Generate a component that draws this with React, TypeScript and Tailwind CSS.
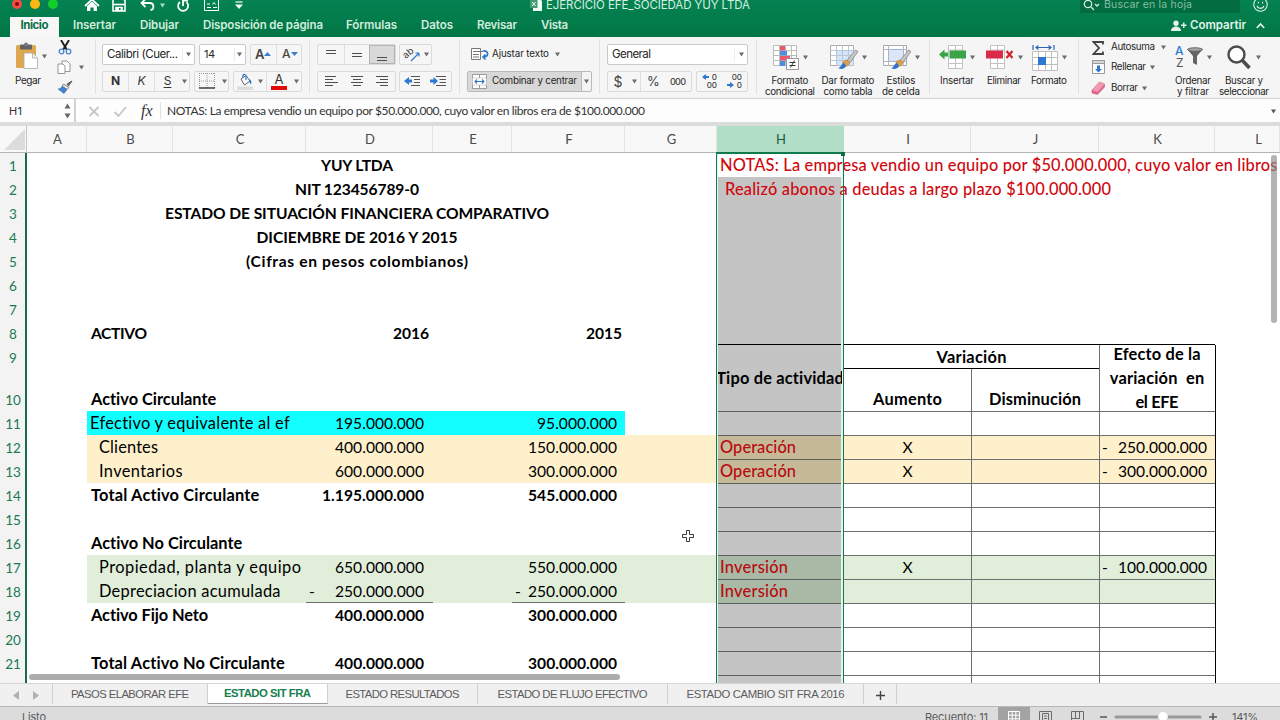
import { useLayoutEffect, useRef, useState, type ReactNode } from 'react';
import clsx from 'clsx';

interface FitProps {
  w: number;
  className?: string;
  children: string;
}

// Spreads the letters of a label so that it takes exactly `w` pixels
function Fit({ w, className, children }: FitProps) {
  const ref = useRef<HTMLSpanElement>(null);
  const [spacing, setSpacing] = useState(0);

  useLayoutEffect(() => {
    if (!ref.current || children.length < 2) return;
    const natural = ref.current.getBoundingClientRect().width;
    setSpacing((w - natural) / (children.length - 1));
  }, []);

  return (
    <span
      ref={ref}
      className={clsx('inline-block whitespace-pre shrink-0', className)}
      style={{ letterSpacing: spacing, marginRight: -spacing }}
    >
      {children}
    </span>
  );
}

function Arrow({ className = 'text-[#6b6b6b]' }: { className?: string }) {
  return (
    <svg viewBox="0 0 6 5" className={clsx('w-[5px] h-[5px] shrink-0', className)}>
      <path d="M0 0h6L3 5z" fill="currentColor" />
    </svg>
  );
}

/* ---------- Title bar ---------- */

const menuTabs = [
  { label: 'Insertar', w: 43, box: 'w-[67px]' },
  { label: 'Dibujar', w: 39, box: 'w-[63px]' },
  { label: 'Disposición de página', w: 120, box: 'w-[143px]' },
  { label: 'Fórmulas', w: 51, box: 'w-[75px]' },
  { label: 'Datos', w: 32, box: 'w-[56px]' },
  { label: 'Revisar', w: 40, box: 'w-[64px]' },
  { label: 'Vista', w: 27, box: 'w-[40px]' }
];

function TitleBar() {
  return (
    <header className="h-[37px] bg-gradient-to-b from-[#058251] to-[#027645] text-white overflow-hidden font-['Inter',sans-serif]">
      <div className="h-[17px] flex">
        <div className="w-[530px] h-[9px] flex items-center">
          <span className="ml-3 -mt-[2px] size-[10px] rounded-full bg-[#fb4946] flex items-center justify-center">
            <span className="size-[4px] rounded-full bg-[#7c0a08]" />
          </span>
          <span className="ml-[8px] -mt-[2px] size-[10px] rounded-full bg-[#fdb912]" />
          <span className="ml-[8px] -mt-[2px] size-[10px] rounded-full bg-[#12cf2c]" />
          <svg viewBox="0 0 16 14" className="ml-[26px] mt-[1px] w-[16px] h-[14px] shrink-0">
            <path d="M1 8 8 1.500 15 8" fill="none" stroke="#fff" strokeWidth="1.800" />
            <path d="M3 8.200 8 3.600l5 4.600V13H9.600V9.400H6.400V13H3z" fill="#fff" />
          </svg>
          <svg viewBox="0 0 14 14" className="ml-[12px] mt-[1px] w-[14px] h-[14px] shrink-0" fill="none" stroke="#fff" strokeWidth="1.600">
            <path d="M1 1h10.500L13 2.500V13H1z" />
            <path d="M1.500 6.500h11" />
            <path d="M4 13V9.500h6V13" fill="#fff" />
            <path d="M7.800 10v2" stroke="#047d4c" />
          </svg>
          <svg viewBox="0 0 15 14" className="ml-[14px] mt-[1px] w-[15px] h-[14px] shrink-0" fill="none" stroke="#fff" strokeWidth="1.800">
            <path d="M5.500 1 1.500 5l4 4" />
            <path d="M1.500 5h8c5 0 5 6.500 1 7" />
          </svg>
          <Arrow className="text-white/70 ml-[5px] mt-[1px]" />
          <svg viewBox="0 0 14 14" className="ml-[11px] mt-[2px] w-[14px] h-[14px] shrink-0" fill="none" stroke="#fff" strokeWidth="1.800">
            <path d="M10.500 3.200A5 5 0 1 1 4 3" />
            <path d="M7 7V1.500h5" />
          </svg>
          <svg viewBox="0 0 15 12" className="ml-[14px] w-[15px] h-[12px] shrink-0" fill="none" stroke="#fff">
            <path d="M.5.500h14v11H.500z" />
            <path d="M3 5h3M3 8.500h4M9 8.500h4M8.500 5.500l1.500-2 1.500 2" />
          </svg>
          <svg viewBox="0 0 8 8" className="ml-[16px] mt-[1px] w-[8px] h-[8px] shrink-0">
            <path d="M.5 1h7" stroke="#fff" strokeWidth="1.200" />
            <path d="M0 3.500h8L4 8z" fill="#fff" />
          </svg>
        </div>
        <div className="w-[550px] h-[10px] flex items-center">
          <svg viewBox="0 0 12 14" className="w-[12px] h-[14px]">
            <path d="M3 0h6l3 3v10H3z" fill="#f2fbf6" />
            <path d="M0 2h7.500v8H0z" fill="#3f9c70" />
            <path d="m2 4 3.500 4M5.500 4 2 8" stroke="#fff" />
          </svg>
          <Fit w={204} className="ml-1 text-[11.5px] leading-[12px] text-[#d5efe2]">EJERCICIO EFE_SOCIEDAD YUY LTDA</Fit>
        </div>
        <div className="w-[160px] h-[13px] bg-[#026b40] flex items-center pb-[3px]">
          <svg viewBox="0 0 17 12" className="ml-[3px] w-[17px] h-[12px]" fill="none" stroke="#d3ecdf" strokeWidth="1.300">
            <circle cx="5" cy="5" r="3.700" />
            <path d="m8 8 3 3M12 5l2 2 2-2" />
          </svg>
          <Fit w={88} className="ml-[4px] text-[10.5px] leading-[12px] text-[#86bfa4]">Buscar en la hoja</Fit>
        </div>
        <svg viewBox="0 0 14 14" className="ml-[13px] -mt-[3px] w-[15px] h-[15px]" fill="none" stroke="#e4f4ec">
          <circle cx="7" cy="7" r="6.300" />
          <path d="M3.800 8.200c.8 3 5.600 3 6.400 0M5 4.500v1.500M9 4.500v1.500" />
        </svg>
      </div>
      <nav className="h-5 flex items-center text-[11.5px] font-semibold text-[#d3ecdf]">
        <div className="ml-[10px] mr-[14px] w-[49px] h-full pb-[2px] flex items-center justify-center bg-[#f7f7f7] text-[#0c6f45]">
          <Fit w={28} className="font-bold">Inicio</Fit>
        </div>
        {menuTabs.map((tab) => (
          <div key={tab.label} className={clsx('shrink-0 pb-[2px]', tab.box)}>
            <Fit w={tab.w}>{tab.label}</Fit>
          </div>
        ))}
        <div className="ml-auto mr-[15px] pb-[3px] flex items-center text-[#e4f4ec]">
          <svg viewBox="0 0 16 12" className="w-[16px] h-[12px] mr-[3px]" fill="currentColor">
            <circle cx="5" cy="3.200" r="2.700" />
            <path d="M0 11c0-6 10-6 10 0zM10 4.500h5.500v1.400H10zM12 2.500h1.500V8H12z" />
          </svg>
          <Fit w={56}>Compartir</Fit>
          <svg viewBox="0 0 9 6" className="ml-[10px] w-[9px] h-[6px]" fill="none" stroke="currentColor" strokeWidth="1.700">
            <path d="m.8 5 3.700-4 3.700 4" />
          </svg>
        </div>
      </nav>
    </header>
  );
}

/* ---------- Ribbon ---------- */

const boxed = 'h-[21px] flex items-center rounded-[2px] border border-[#dadada] bg-[#f6f6f6] shrink-0';
const field = 'h-[21px] flex items-center rounded-[2px] border border-[#c9c9c9] bg-white shrink-0';

function Group({ className, children }: { className?: string; children: ReactNode }) {
  return <div className={clsx('h-[55px] shrink-0 border-r border-[#e2e2e2]', className)}>{children}</div>;
}

function Lines({ rows }: { rows: string }) {
  return (
    <svg viewBox="0 0 14 14" className="w-[14px] h-[14px]" stroke="#4e4e4e" strokeWidth="1" fill="none">
      <path d={rows} />
    </svg>
  );
}

interface BigButtonProps {
  box: string;
  lines: { text: string; w: number }[];
  children: ReactNode;
}

function BigButton({ box, lines, children }: BigButtonProps) {
  return (
    <div className={clsx('shrink-0 flex flex-col items-center', box)}>
      <div className="h-[33px] shrink-0 pb-[1px] flex items-center gap-1">
        {children}
        <Arrow />
      </div>
      {lines.map((line) => (
        <Fit key={line.text} w={line.w} className="text-[9.8px] leading-[11px]">{line.text}</Fit>
      ))}
    </div>
  );
}

function Brush() {
  return (
    <>
      <path d="M25.500 5 28 6.500 20 17.500l-3-2z" fill="#c9c9c9" stroke="#777" strokeWidth=".7" />
      <path d="M13 17c2-2.500 6-2 6.500.5S16 22 13 22z" fill="#e0a04a" stroke="#a8722c" strokeWidth=".5" />
      <path d="M8 23c3-.5 3-3.500 5.500-5 2 .5 3 3 1.500 4.500S11 24.500 8 23z" fill="#2d74d2" />
    </>
  );
}

function Ribbon() {
  return (
    <div className="h-[62px] pt-[2px] flex bg-[#f5f5f5] border-b border-[#d2d2d2] text-[#262626] font-['Inter',sans-serif]">
      <Group className="w-[96px] flex">
        <div className="w-[45px] pl-[11px] pt-[3px] flex flex-col items-center">
          <svg viewBox="0 0 24 28" className="w-[24px] h-[28px] -ml-[2px] shrink-0">
            <rect x="1" y="3" width="20" height="23" rx="1.500" fill="#dfa750" />
            <rect x="5" y="2.500" width="12" height="5" rx="1" fill="#636363" />
            <circle cx="11" cy="2.500" r="2" fill="#777" />
            <path d="M9 11h8.500l5 5v10.500H9z" fill="#fff" stroke="#a9a9a9" strokeWidth=".8" />
            <path d="M17.500 11v5h5" fill="#eee" stroke="#a9a9a9" strokeWidth=".8" />
          </svg>
          <Fit w={26} className="mt-[4px] text-[10px] leading-[13px]">Pegar</Fit>
        </div>
        <Arrow className="mt-[15px] -ml-[3px] text-[#6b6b6b]" />
        <div className="ml-[10px] pt-[1px]">
          <svg viewBox="0 0 14 15" className="w-[14px] h-[15px] ml-[1px]">
            <path d="M3 0 9 10M11 0 5 10" stroke="#1c1c1c" strokeWidth="1.900" />
            <circle cx="3.500" cy="11.500" r="2.300" fill="none" stroke="#4a86cf" strokeWidth="1.300" />
            <circle cx="10.500" cy="11.500" r="2.300" fill="none" stroke="#4a86cf" strokeWidth="1.300" />
          </svg>
          <div className="mt-[5px] flex items-center gap-[8px]">
            <svg viewBox="0 0 14 15" className="w-[14px] h-[15px]" fill="#fff" stroke="#8b8b8b" strokeWidth=".9">
              <path d="M5 1h5l3 3v7.500H5z" />
              <path d="M1 4h5l2 2v7.500H1z" />
            </svg>
            <Arrow />
          </div>
          <svg viewBox="0 0 16 14" className="mt-[5px] w-[16px] h-[14px]">
            <path d="m15 1-5 3 1.500 2z" stroke="#555" fill="#777" />
            <path d="m6.500 4 5.500 3.500-2 2L5 6z" fill="#e8e8e8" stroke="#666" strokeWidth=".8" />
            <path d="M5 6.500 10 9.500l-3 4L1 9c2 0 3-1 4-2.500z" fill="#3f83d0" stroke="#2c5f9e" strokeWidth=".5" />
          </svg>
        </div>
      </Group>

      {/* Font */}
      <Group className="w-[214px] pl-[6px] pt-[5px] flex flex-col gap-[6px]">
        <div className="flex gap-1">
          <div className={clsx(field, 'w-[93px] pl-[4px]')}>
            <Fit w={71} className="text-[11.5px]">Calibri (Cuer...</Fit>
            <span className="ml-[4px] h-[13px] w-px bg-[#ececec] mr-[3px]" />
            <Arrow />
          </div>
          <div className={clsx(field, 'w-[47px] pl-[4px]')}>
            <Fit w={11} className="text-[11px]">14</Fit>
            <span className="ml-[19px] h-[13px] w-px bg-[#ececec] mr-[2px]" />
            <Arrow />
          </div>
          <div className={clsx(boxed, 'w-[52px]')}>
            <div className="w-[25px] pl-[4px] flex items-center text-[13px] font-semibold text-[#444]">
              A
              <svg viewBox="0 0 7 4" className="w-[7px] h-[4px]"><path d="M0 4h7L3.500 0z" fill="#3b7ec8" /></svg>
            </div>
            <span className="h-full w-px bg-[#dedede]" />
            <div className="pl-[5px] flex items-center text-[12px] font-medium text-[#444]">
              A
              <svg viewBox="0 0 7 4" className="w-[7px] h-[4px]"><path d="M0 0h7L3.500 4z" fill="#3b7ec8" /></svg>
            </div>
          </div>
        </div>
        <div className="flex gap-1">
          <div className={clsx(boxed, 'w-[88px] text-[12px] text-[#333]')}>
            <span className="w-[25px] text-center font-bold">N</span>
            <span className="h-full w-px bg-[#dedede]" />
            <span className="w-[25px] text-center italic">K</span>
            <span className="h-full w-px bg-[#dedede]" />
            <span className="w-[25px] text-center underline underline-offset-2">S</span>
            <Arrow className="ml-[2px] text-[#6b6b6b]" />
          </div>
          <div className={clsx(boxed, 'w-[35px] pl-[4px]')}>
            <svg viewBox="0 0 16 16" className="w-[16px] h-[16px] mr-[7px]" fill="none">
              <path d="M.5 0v15M8 0v15M15.500 0v15M0 .5h16M0 8h16" stroke="#9a9a9a" strokeDasharray="1 1" />
              <path d="M0 15h16" stroke="#222" strokeWidth="1.300" />
            </svg>
            <Arrow />
          </div>
          <div className={clsx(boxed, 'w-[69px] pl-[3px]')}>
            <svg viewBox="0 0 16 17" className="w-[16px] h-[17px] mr-[5px]">
              <path d="m4 6 5-3.500L13 8l-5.500 4z" fill="#f7fbff" stroke="#555" strokeWidth=".9" />
              <path d="M6 5c-1-4 2-5 3-2v4" fill="none" stroke="#3b7ec8" strokeWidth="1.200" />
              <path d="M12 6c3 1 2.500 4 2 5.500-1.500-1-1.500-3-2-5.500z" fill="#2f78cf" />
              <path d="M0 13.500h16V17H0z" fill="#dcdcdc" />
            </svg>
            <Arrow />
            <span className="ml-[3px] h-full w-px bg-[#dedede]" />
            <div className="ml-[4px] mr-[7px] w-[16px] flex flex-col items-center">
              <span className="text-[13px] leading-[12px] text-[#333]">A</span>
              <span className="mt-[1px] w-full h-[4px] bg-[#e5080b]" />
            </div>
            <Arrow />
          </div>
        </div>
      </Group>

      {/* Alignment */}
      <Group className="w-[150px] pl-[7px] pt-[5px] flex flex-col gap-[6px]">
        <div className="flex gap-[3px]">
          <div className={clsx(boxed, 'w-[79px]')}>
            <span className="w-[26px] h-full flex justify-center"><Lines rows="M2 5.500h10M2 8.500h10" /></span>
            <span className="w-[26px] h-full flex items-center justify-center border-l border-[#dedede]"><Lines rows="M2 6.500h10M2 9.500h10" /></span>
            <span className="w-[26px] h-full flex items-end justify-center border border-[#b4b4b4] bg-[#d9d9d9]"><Lines rows="M2 8.500h10M2 11.500h10" /></span>
          </div>
          <div className={clsx(boxed, 'w-[33px] pl-[4px]')}>
            <svg viewBox="0 0 17 17" className="w-[17px] h-[17px] mr-[3px] overflow-visible">
              <text x="0" y="10" fontSize="9.500" fill="#333" transform="rotate(-40 5 9)">ab</text>
              <path d="m7 15 8-8M15 7v3.500M15 7h-3.500" stroke="#2f78cf" strokeWidth="1.200" fill="none" />
            </svg>
            <Arrow />
          </div>
        </div>
        <div className="flex gap-[3px]">
          <div className={clsx(boxed, 'w-[79px]')}>
            <span className="w-[26px] flex justify-center"><Lines rows="M1 2.500h11M1 5.500h8M1 8.500h13M1 11.500h8" /></span>
            <span className="w-[26px] flex justify-center"><Lines rows="M1 2.500h12M3 5.500h8M1 8.500h12M3 11.500h8" /></span>
            <span className="w-[26px] flex justify-center"><Lines rows="M1 2.500h12M5 5.500h8M1 8.500h12M5 11.500h8" /></span>
          </div>
          <div className={clsx(boxed, 'w-[53px] pl-[4px] gap-[10px]')}>
            <svg viewBox="0 0 16 12" className="w-[16px] h-[12px]">
              <path d="M0 6l5-4v2.500h3v3H5V10z" fill="#2f78cf" />
              <path d="M7 1.500h9M10 4.500h6M10 7.500h6M7 10.500h9" stroke="#555" />
            </svg>
            <svg viewBox="0 0 16 12" className="w-[16px] h-[12px]">
              <path d="M8 6 3.500 2v2.500H0v3h3.500V10z" fill="#2f78cf" />
              <path d="M6 1.500h10M9.500 4.500H16M9.500 7.500H16M6 10.500h10" stroke="#555" />
            </svg>
          </div>
        </div>
      </Group>

      {/* Wrap and merge */}
      <Group className="w-[140px] pl-[7px] pt-[5px] flex flex-col gap-[6px]">
        <div className="h-[21px] pl-[4px] flex items-center">
          <svg viewBox="0 0 18 12" className="w-[18px] h-[12px] mr-[3px]">
            <path d="M.5.500h9v11h-9z" fill="#fff" stroke="#777" />
            <path d="M2 3.500h10M2 6.500h6M2 9h6" stroke="#777" />
            <path d="M12 3c6-1 6 6 1 6M14.500 6.500 12 9l2.500 2.500" stroke="#2f78cf" strokeWidth="1.600" fill="none" />
          </svg>
          <Fit w={57} className="text-[9.8px]">Ajustar texto</Fit>
          <Arrow className="ml-[6px] text-[#6b6b6b]" />
        </div>
        <div className="h-[21px] w-[125px] flex items-center rounded-[2px] border border-[#bababa] bg-[#f3f3f3]">
          <div className="w-[114px] h-full pl-[4px] flex items-center bg-[#d8d8d8] border-r border-[#bcbcbc]">
            <svg viewBox="0 0 15 15" className="w-[15px] h-[15px] mr-[5px]">
              <path d="M.5.500h14v14H.500z" fill="#fff" stroke="#9b9b9b" />
              <path d="M7.500 0v4M7.500 11v4" stroke="#9b9b9b" />
              <path d="M.5 4h14v7H.500z" fill="#fff" stroke="#bbb" strokeWidth=".6" />
              <path d="M3 7.500h9M5 5.500l-2 2 2 2M10 5.500l2 2-2 2" stroke="#2f78cf" strokeWidth="1.100" fill="none" />
            </svg>
            <Fit w={85} className="text-[9.8px]">Combinar y centrar</Fit>
          </div>
          <Arrow className="ml-[2px] text-[#6b6b6b]" />
        </div>
      </Group>

      {/* Number format */}
      <Group className="w-[157px] pl-[7px] pt-[5px] flex flex-col gap-[6px]">
        <div className={clsx(field, 'w-[141px] pl-[4px]')}>
          <Fit w={39} className="text-[11.5px]">General</Fit>
          <span className="ml-auto mr-[4px] h-[13px] w-px bg-[#ececec]" />
          <Arrow className="mr-[3px] text-[#6b6b6b]" />
        </div>
        <div className="flex gap-1">
          <div className={clsx(boxed, 'w-[85px] text-[#444]')}>
            <span className="w-[20px] text-center text-[14px]">$</span>
            <Arrow className="ml-[4px] text-[#6b6b6b]" />
            <span className="ml-[3px] h-full w-px bg-[#dedede]" />
            <span className="w-[25px] text-center text-[13px]">%</span>
            <Fit w={16} className="ml-[4px] text-[9px] font-medium">000</Fit>
          </div>
          <div className={clsx(boxed, 'w-[52px] pl-[5px] gap-[10px]')}>
            <div className="w-[15px] flex flex-col items-end text-[8px] leading-[8px] font-medium text-[#444]">
              <span className="flex items-center gap-[3px]">
                <svg viewBox="0 0 7 6" className="w-[7px] h-[6px]"><path d="m0 3 4-3v2h3v2H4v2z" fill="#2f78cf" /></svg>0
              </span>
              <span>00</span>
            </div>
            <div className="w-[15px] flex flex-col items-end text-[8px] leading-[8px] font-medium text-[#444]">
              <span>00</span>
              <span className="flex items-center gap-[3px]">
                <svg viewBox="0 0 7 6" className="w-[7px] h-[6px]"><path d="M7 3 3 0v2H0v2h3v2z" fill="#2f78cf" /></svg>0
              </span>
            </div>
          </div>
        </div>
      </Group>

      {/* Styles */}
      <Group className="w-[173px] pl-[5px] pt-[3px] flex">
        <BigButton box="w-[56px]" lines={[{ text: 'Formato', w: 37 }, { text: 'condicional', w: 50 }]}>
          <svg viewBox="0 0 26 25" className="w-[26px] h-[25px]">
            <path d="M.5.500h23v20H.500zM.5 5.500h23M.5 10.500h23M.5 15.500h23M6.500.500v20M12.500.500v20M18.500.500v20" fill="#fff" stroke="#bcbcbc" />
            <path d="M7 1h5v4.500H7zM7 11h10v4.500H7z" fill="#e8596e" />
            <path d="M7 6h7v4.500H7zM7 16h5v5H7z" fill="#4a8ee0" />
            <path d="M13.500 13.500h12v11h-12z" fill="#fff" stroke="#999" />
            <path d="M16.500 17.500h6M16.500 20.500h6M21.500 15.500l-4 7" stroke="#333" />
          </svg>
        </BigButton>
        <BigButton box="w-[60px]" lines={[{ text: 'Dar formato', w: 53 }, { text: 'como tabla', w: 49 }]}>
          <svg viewBox="0 0 28 25" className="w-[28px] h-[25px]">
            <path d="M.5.500h23v20H.500z" fill="#fff" stroke="#aaa" />
            <path d="M6.500 5.500h17v15h-17z" fill="#d5e5f8" />
            <path d="M.5 5.500h23M.5 10.500h23M.5 15.500h23M6.500.500v20M12.500.500v20M18.500.500v20" stroke="#b9c6d6" />
            <Brush />
          </svg>
        </BigButton>
        <BigButton box="w-[46px]" lines={[{ text: 'Estilos', w: 29 }, { text: 'de celda', w: 38 }]}>
          <svg viewBox="0 0 28 25" className="w-[28px] h-[25px]">
            <path d="M.5.500h23v20H.500z" fill="#fff" stroke="#aaa" />
            <path d="M.5 4.500h23M.5 16.500h23M5.500.500v20M20.500.500v20" stroke="#bbb" />
            <path d="M5.500 4.500h15v12h-15z" fill="#dce6f7" stroke="#9fb4d6" />
            <Brush />
          </svg>
        </BigButton>
      </Group>

      {/* Cells */}
      <Group className="w-[149px] pl-[2px] pt-[3px] flex">
        <BigButton box="w-[50px]" lines={[{ text: 'Insertar', w: 34 }]}>
          <svg viewBox="0 0 27 25" className="w-[27px] h-[25px]">
            <path d="M9.500.500h14v23h-14zM9.500 5h14M9.500 18.500h14M16.500.500v23" fill="#fff" stroke="#c2c2c2" />
            <path d="M10.500 5.500H27v8H10.500z" fill="#3aa346" />
            <path d="m0 9.500 5.500-5v3H9v4H5.500v3z" fill="#3aa346" />
          </svg>
        </BigButton>
        <BigButton box="w-[44px]" lines={[{ text: 'Eliminar', w: 34 }]}>
          <svg viewBox="0 0 28 25" className="w-[28px] h-[25px]">
            <path d="M4.500.500h14v23h-14zM4.500 5h14M4.500 18.500h14M11.500.500v23" fill="#fff" stroke="#c2c2c2" />
            <path d="M0 5.500h17v8H0z" fill="#d92b48" />
            <path d="m20.500 6 6 7M26.500 6l-6 7" stroke="#d3232f" strokeWidth="2.200" />
          </svg>
        </BigButton>
        <BigButton box="w-[46px]" lines={[{ text: 'Formato', w: 36 }]}>
          <svg viewBox="0 0 26 26" className="w-[26px] h-[26px]">
            <path d="M1 0v5M22 0v5M4 2.500h15M6.500.500l-2.500 2 2.500 2M16.500.500l2.500 2-2.500 2" stroke="#2b66b5" strokeWidth="1.200" fill="none" />
            <path d="M.5 6.500h25v19H.500zM.5 12.500h25M.5 19.500h25M6.500 6.500v19M13.500 6.500v19M19.500 6.500v19" fill="#fff" stroke="#bfbfbf" />
            <path d="M6 12h8v8H6z" fill="#2f78cf" />
          </svg>
        </BigButton>
      </Group>

      {/* Editing */}
      <div className="w-[89px] shrink-0 pl-[13px] flex flex-col text-[9.8px]">
        <div className="h-[18px] flex items-center">
          <svg viewBox="0 0 12 14" className="w-[12px] h-[14px] mr-[7px]">
            <path d="M11 3.500V1H1.500l5.500 6-5.500 6H11v-2.500" fill="none" stroke="#444" strokeWidth="1.800" />
          </svg>
          <Fit w={44}>Autosuma</Fit>
          <Arrow className="ml-[6px] text-[#6b6b6b]" />
        </div>
        <div className="h-[22px] flex items-center">
          <svg viewBox="0 0 13 14" className="w-[13px] h-[14px] mr-[6px]">
            <path d="M.5.500h12v13H.500z" fill="#fff" stroke="#999" />
            <path d="M.5.500h12v3H.500z" fill="#d6d6d6" stroke="#999" />
            <path d="M6.500 12.500 3 9h2V5.500h3V9h2z" fill="#2f78cf" />
          </svg>
          <Fit w={35}>Rellenar</Fit>
          <Arrow className="ml-[4px] text-[#6b6b6b]" />
        </div>
        <div className="h-[20px] flex items-center">
          <svg viewBox="0 0 14 14" className="-ml-[1px] w-[14px] h-[14px] mr-[6px]">
            <path d="m1 9 7.500-8 5 2v3l-7 7.500L1 12z" fill="#e4688a" stroke="#b84766" strokeWidth=".5" />
            <path d="m1 9 7.500-8 5 2-7 8z" fill="#f39ab3" />
          </svg>
          <Fit w={27}>Borrar</Fit>
          <Arrow className="ml-[4px] text-[#6b6b6b]" />
        </div>
      </div>
      <div className="pt-[3px] flex">
        <BigButton box="w-[50px]" lines={[{ text: 'Ordenar', w: 36 }, { text: 'y filtrar', w: 32 }]}>
          <svg viewBox="0 0 28 25" className="w-[28px] h-[25px] overflow-visible">
            <text x="0" y="10" fontSize="12" fontWeight="500" fill="#2f78cf">A</text>
            <text x="1" y="22" fontSize="12" fill="#555">Z</text>
            <path d="M12 4h16l-6 7v9l-4-2v-7z" fill="#636363" />
            <ellipse cx="20" cy="4.500" rx="7.500" ry="1.700" fill="#a8a8a8" stroke="#636363" />
          </svg>
        </BigButton>
        <BigButton box="w-[52px]" lines={[{ text: 'Buscar y', w: 38 }, { text: 'seleccionar', w: 50 }]}>
          <svg viewBox="0 0 24 25" className="w-[24px] h-[25px] mr-[1px]">
            <circle cx="9.500" cy="9.500" r="8" fill="#fff" stroke="#4b4b4b" strokeWidth="2.400" />
            <path d="m15.500 15.500 7 7.500" stroke="#4b4b4b" strokeWidth="3.600" />
          </svg>
        </BigButton>
      </div>
    </div>
  );
}

function FormulaBar() {
  return (
    <div className="h-[27px] flex items-stretch bg-[#fdfdfd] border-b-[4px] border-[#dcdcdc] text-[#333]">
      <div className="w-[76px] flex items-center border-r-2 border-[#d2d2d2] pl-[9px] pt-[2px]">
        <Fit w={13} className="font-['Inter',sans-serif] text-[11px]">H1</Fit>
        <svg viewBox="0 0 7 16" className="ml-[42px] w-[7px] h-[16px]" fill="#666">
          <path d="M.5 5.500h6L3.500.500zM.5 10.500h6l-3 5z" />
        </svg>
      </div>
      <svg viewBox="0 0 84 24" className="w-[84px] h-[24px]" fill="none" stroke="#c6c6c6" strokeWidth="1.800">
        <path d="m13.500 8 9 9M22.500 8l-9 9M38.500 13l4 4 7.500-9" />
        <text x="65" y="16.500" className="font-['Liberation_Serif',serif] italic" fontSize="16" fill="#333" stroke="none">fx</text>
      </svg>
      <div className="border-l border-[#e3e3e3] my-[3px] pl-[6px] pt-[2px] flex items-center">
        <Fit w={478} className="font-['Lato',sans-serif] text-[12px]">
          NOTAS: La empresa vendio un equipo por $50.000.000, cuyo valor en libros era de $100.000.000
        </Fit>
      </div>
      <Arrow className="ml-auto mr-[4px] mt-[10px] text-[#555]" />
    </div>
  );
}

/* ---------- Sheet ---------- */

const sheetCols =
  'grid-cols-[27px_60px_86px_133px_127px_79px_113px_92px_127px_127px_128px_116px_65px]';

const columns = ['A', 'B', 'C', 'D', 'E', 'F', 'G', 'H', 'I', 'J', 'K', 'L'];

const rowStart = [
  'row-start-1', 'row-start-2', 'row-start-3', 'row-start-4', 'row-start-5', 'row-start-6', 'row-start-7',
  'row-start-8', 'row-start-9', 'row-start-10', 'row-start-11', 'row-start-12', 'row-start-13', 'row-start-14',
  'row-start-15', 'row-start-16', 'row-start-17', 'row-start-18', 'row-start-19', 'row-start-20', 'row-start-21',
  'row-start-22'
];

const titles = [
  { text: 'YUY LTDA', w: 72 },
  { text: 'NIT 123456789-0', w: 124 },
  { text: 'ESTADO DE SITUACIÓN FINANCIERA COMPARATIVO', w: 384 },
  { text: 'DICIEMBRE DE 2016 Y 2015', w: 201 },
  { text: '(Cifras en pesos colombianos)', w: 222 }
];

interface Account {
  row: number;
  name: string;
  w: number;
  bold?: boolean;
  indent?: boolean;
  y2016?: string;
  y2015?: string;
  numW?: number;
  minus?: boolean;
}

const accounts: Account[] = [
  { row: 10, name: 'Activo Circulante', w: 125.5, bold: true },
  { row: 11, name: 'Efectivo y equivalente al ef', w: 200, y2016: '195.000.000', y2015: '95.000.000' },
  { row: 12, name: 'Clientes', w: 59, indent: true, y2016: '400.000.000', y2015: '150.000.000' },
  { row: 13, name: 'Inventarios', w: 83.5, indent: true, y2016: '600.000.000', y2015: '300.000.000' },
  { row: 14, name: 'Total Activo Circulante', w: 168.5, bold: true, y2016: '1.195.000.000', y2015: '545.000.000', numW: 102 },
  { row: 16, name: 'Activo No Circulante', w: 151.5, bold: true },
  { row: 17, name: 'Propiedad, planta y equipo', w: 202, indent: true, y2016: '650.000.000', y2015: '550.000.000' },
  { row: 18, name: 'Depreciacion acumulada', w: 181.5, indent: true, y2016: '250.000.000', y2015: '250.000.000', minus: true },
  { row: 19, name: 'Activo Fijo Neto', w: 117.5, bold: true, y2016: '400.000.000', y2015: '300.000.000' },
  { row: 21, name: 'Total Activo No Circulante', w: 194, bold: true, y2016: '400.000.000', y2015: '300.000.000' }
];

const activities = [
  { row: 12, kind: 'Operación', w: 76, fill: 'bg-[#c5b998]', mark: 'X', effect: '250.000.000' },
  { row: 13, kind: 'Operación', w: 76, fill: 'bg-[#c5b998]', mark: 'X', effect: '300.000.000' },
  { row: 17, kind: 'Inversión', w: 68, fill: 'bg-[#a9b9a6]', mark: 'X', effect: '100.000.000' },
  { row: 18, kind: 'Inversión', w: 68, fill: 'bg-[#a9b9a6]' }
];

function Amount({ text, w, minus }: { text: string; w: number; minus?: boolean }) {
  return (
    <>
      {minus && <span className="mr-auto">-</span>}
      <Fit w={w}>{text}</Fit>
    </>
  );
}

function Sheet() {
  return (
    <main className="h-[558px] relative bg-white overflow-hidden font-['Lato',sans-serif] text-black">
      <div className={clsx('grid h-[27px] border-b border-[#b5b5b5] bg-[#f8f8f8] text-[13px] text-[#4a4a4a]', sheetCols)}>
        <div className="flex items-end justify-end border-r border-[#c4c4c4] pb-[2px] pr-[1px]">
          <svg viewBox="0 0 21 21" className="w-[21px] h-[21px]"><path d="M21 0v21H0z" fill="#dcdcdc" /></svg>
        </div>
        {columns.map((c) => (
          <div
            key={c}
            className={clsx(
              'flex items-center justify-center border-r pt-[1px]',
              c === 'H' ? 'bg-[#b1dfc8] border-[#b1dfc8] text-[#1d5b3d]' : 'border-[#e4e4e4]',
              c === 'L' ? 'pl-[23px]' : 'pl-[2px]'
            )}
          >
            {c}
          </div>
        ))}
      </div>

      <div className={clsx('grid text-[15.6px] leading-[24px] grid-rows-[repeat(9,24px)_42px_repeat(12,24px)]', sheetCols)}>
        <div className="col-start-1 row-start-1 row-end-23 bg-[#f3f3f3] border-r-2 border-[#1a6b48]" />
        {rowStart.slice(0, 21).map((row, i) => (
          <div key={row} className={clsx('col-start-1 flex items-end justify-center pr-px -mb-px text-[13.5px] text-[#1c7a51]', row)}>
            {i + 1}
          </div>
        ))}

        {/* Row fills */}
        <div className="col-start-3 col-end-8 row-start-11 bg-[#12ffff]" />
        <div className="col-start-3 col-end-13 row-start-12 row-span-2 bg-[#fff0cc]" />
        <div className="col-start-3 col-end-13 row-start-17 row-span-2 bg-[#e0eeda]" />

        {/* Selected column */}
        <div className="col-start-9 row-start-1 row-end-23 mr-[1px] bg-[#e6f3ec]" />
        <div className="col-start-9 row-start-1 ml-[1px] mr-[2px] bg-white" />
        <div className="col-start-9 row-start-2 row-end-23 ml-[1px] mr-[3px] bg-[#c4c4c4]" />

        {/* Borders of the variation table */}
        <div className="col-start-9 row-start-8 ml-[1px] mr-[3px] border-b border-black" />
        <div className="col-start-10 col-end-13 row-start-8 border-b border-black" />
        <div className="col-start-10 col-end-12 row-start-9 border-b border-black" />
        {rowStart.slice(10).map((row) => (
          <div key={row} className={clsx('col-start-10 col-end-13 border-t border-[#6e6e6e]', row)} />
        ))}
        <div className="col-start-11 row-start-10 row-end-23 border-l border-[#6e6e6e]" />
        <div className="col-start-12 row-start-9 row-end-23 border-l border-[#6e6e6e]" />
        <div className="col-start-13 row-start-9 row-end-23 border-l border-black" />

        {titles.map((t, i) => (
          <div key={t.text} className={clsx('col-start-3 col-end-8 flex justify-center pl-[2px] font-bold', rowStart[i])}>
            <Fit w={t.w}>{t.text}</Fit>
          </div>
        ))}

        <div className="col-start-3 col-span-2 row-start-8 pl-[4px] font-bold"><Fit w={56}>ACTIVO</Fit></div>
        <div className="col-start-5 row-start-8 flex justify-end pr-[4px] font-bold"><Fit w={36}>2016</Fit></div>
        <div className="col-start-7 row-start-8 flex justify-end pr-[3px] font-bold"><Fit w={36}>2015</Fit></div>

        {accounts.map((a) => (
          <div
            key={a.name}
            className={clsx('col-start-3 col-end-8 grid grid-cols-subgrid items-end', rowStart[a.row - 1], a.bold && 'font-bold')}
          >
            <div className={clsx('col-span-2 h-[24px] text-[16.4px]', a.indent ? 'pl-[12px]' : a.bold ? 'pl-[4px]' : 'pl-[3px]')}>
              <Fit w={a.w}>{a.name}</Fit>
            </div>
            {a.y2016 && a.y2015 && (
              <>
                <div className="flex justify-end pl-[3px] pr-[9px]">
                  <Amount text={a.y2016} w={a.numW ?? 89} minus={a.minus} />
                </div>
                <div className="col-start-5 flex justify-end pl-[3px] pr-[8px]">
                  <Amount text={a.y2015} w={a.y2015.length === 10 ? 80 : 89} minus={a.minus} />
                </div>
              </>
            )}
          </div>
        ))}
        <div className="col-start-5 row-start-19 -mt-px border-t border-[#6e6e6e]" />
        <div className="col-start-7 row-start-19 -mt-px border-t border-[#6e6e6e]" />

        {/* Notes run over the neighbouring cells */}
        <div className="col-start-9 col-end-14 row-start-1 pl-[3px] text-[16.4px] font-medium text-[#d0080f]">
          <Fit w={557.5}>NOTAS: La empresa vendio un equipo por $50.000.000, cuyo valor en libros</Fit>
        </div>
        <div className="col-start-9 col-end-14 row-start-2 pl-[8px] text-[16.4px] font-medium text-[#d0080f]">
          <Fit w={386}>Realizó abonos a deudas a largo plazo $100.000.000</Fit>
        </div>

        <div className="col-start-9 row-start-9 row-span-2 ml-[1px] mr-[2px] flex items-center justify-center overflow-hidden text-[16.4px] font-bold">
          <Fit w={128}>Tipo de actividad</Fit>
        </div>
        <div className="col-start-10 col-span-2 row-start-9 flex justify-center text-[16.4px] font-bold"><Fit w={70}>Variación</Fit></div>
        <div className="col-start-10 row-start-10 flex items-end justify-center text-[16.4px] font-bold"><Fit w={69}>Aumento</Fit></div>
        <div className="col-start-11 row-start-10 flex items-end justify-center text-[16.4px] font-bold"><Fit w={92}>Disminución</Fit></div>
        <div className="col-start-12 row-start-9 row-span-2 -mt-[3px] flex flex-col items-center text-[16.4px] font-bold">
          <Fit w={87}>Efecto de la</Fit>
          <Fit w={94.5}>variación  en</Fit>
          <Fit w={43}>el EFE</Fit>
        </div>

        {activities.map((a) => (
          <div key={a.row} className={clsx('col-start-9 col-end-13 grid grid-cols-subgrid', rowStart[a.row - 1])}>
            <div className={clsx('ml-[1px] mr-[3px] pl-[2px] text-[16.4px] font-medium text-[#b80a0f]', a.fill)}><Fit w={a.w}>{a.kind}</Fit></div>
            {a.mark && <div className="text-center">{a.mark}</div>}
            {a.effect && (
              <div className="col-start-4 flex justify-end pl-[3px] pr-[8px]"><Amount text={a.effect} w={89} minus /></div>
            )}
          </div>
        ))}
        {rowStart.slice(10).map((row) => (
          <div key={row} className={clsx('col-start-9 ml-[1px] mr-[3px] border-t border-[#5f5f5f]', row)} />
        ))}

        <div className="col-start-9 row-start-1 row-end-23 -ml-px -mt-px border-x border-t-2 border-[#0f7a4c] relative">
          <span className="absolute -right-[2px] -top-[2px] size-[4px] bg-[#0f6b43]" />
        </div>
      </div>

      {/* Scroll bars and cursor */}
      <span className="absolute right-[3px] top-[29px] w-[6px] h-[168px] rounded-full bg-[#8a8a8a]/65" />
      <span className="absolute left-[29px] bottom-[3px] w-[591px] h-[6px] rounded-full bg-[#acacac]" />
      <svg viewBox="0 0 13 13" className="absolute left-[682px] top-[404px] w-[13px] h-[13px]">
        <path d="M4.500.500h3v4h4v3h-4v4h-3v-4h-4v-3h4z" fill="#fff" stroke="#333" />
      </svg>
    </main>
  );
}

/* ---------- Bottom bars ---------- */

const sheetTabs = [
  { label: 'PASOS ELABORAR EFE', w: 118, box: 'w-[155px]' },
  { label: 'ESTADO SIT FRA', w: 87, box: 'w-[120px]', active: true },
  { label: 'ESTADO RESULTADOS', w: 114, box: 'w-[150px]' },
  { label: 'ESTADO DE FLUJO EFECTIVO', w: 150, box: 'w-[190px]' },
  { label: 'ESTADO CAMBIO SIT FRA 2016', w: 158, box: 'w-[196px]' }
];

function SheetTabs() {
  return (
    <div className="h-[24px] flex bg-[#f0f0f0] border-t border-[#d5d5d5] border-b border-b-[#b9b9b9] font-['Liberation_Sans',sans-serif] text-[11.3px] text-[#5c5c5c]">
      <div className="w-[53px] h-[20px] pt-[3px] flex items-center border-r border-[#d0d0d0] pl-[13px] gap-[14px]">
        <svg viewBox="0 0 6 9" className="w-[6px] h-[9px]"><path d="M6 0v9L0 4.500z" fill="#b0b0b0" /></svg>
        <svg viewBox="0 0 6 9" className="w-[6px] h-[9px]"><path d="M0 0v9l6-4.500z" fill="#b0b0b0" /></svg>
      </div>
      {sheetTabs.map((tab) => (
        <div
          key={tab.label}
          className={clsx(
            'h-[20px] shrink-0 flex items-center justify-center border-r border-[#d0d0d0]',
            tab.box,
            tab.active && 'bg-white font-bold text-[#18804f] border-b border-b-[#9c9c9c]'
          )}
        >
          <Fit w={tab.w}>{tab.label}</Fit>
        </div>
      ))}
      <div className="w-[33px] h-[20px] pt-[2px] flex items-center justify-center border-r border-[#d0d0d0]">
        <svg viewBox="0 0 9 9" className="w-[9px] h-[9px]"><path d="M4.500 0v9M0 4.500h9" stroke="#444" strokeWidth="1.400" /></svg>
      </div>
    </div>
  );
}

function StatusBar() {
  return (
    <footer className="h-[13px] flex overflow-hidden bg-[#dcdcdc] font-['Inter',sans-serif] text-[11px] leading-[20px] text-[#5a5a5a]">
      <Fit w={24} className="ml-[22px]">Listo</Fit>
      <Fit w={63} className="ml-auto">Recuento: 11</Fit>
      <div className="ml-[10px] w-[32px] h-full pt-[4px] flex justify-center bg-[#a3a3a3]">
        <svg viewBox="0 0 12 12" className="w-[12px] h-[12px]">
          <path d="M.5.500h11v11H.500zM4.200.500v11M7.800.500v11M.5 4.200h11M.5 7.800h11" fill="none" stroke="#fff" />
        </svg>
      </div>
      <svg viewBox="0 0 45 12" className="ml-[9px] mt-[4px] w-[45px] h-[12px] shrink-0" fill="none" stroke="#6a6a6a">
        <path d="M.5.500h12v11H.500zM3.500 2.500h6v9h-6zM5 5h3M5 7.500h3" />
        <path d="M32.500.500h12v11h-12zM36.500.500v7h4v-7M32.500 7.500h4M40.500 4.500v3" />
      </svg>
      <svg viewBox="0 0 117 14" className="ml-[16px] mt-[2px] w-[117px] h-[14px] shrink-0">
        <path d="M0 8h7M109 8h8M113 4v8" stroke="#555" strokeWidth="1.500" />
        <path d="M16 8h84" stroke="#9a9a9a" strokeWidth="3" strokeLinecap="round" />
        <circle cx="63" cy="7.500" r="5" fill="#fff" stroke="#c4c4c4" strokeWidth=".5" />
      </svg>
      <div className="ml-[15px] mr-[22px] shrink-0">
        <Fit w={26}>141%</Fit>
      </div>
    </footer>
  );
}

export default function App() {
  return (
    <div className="w-[1280px] h-[720px] overflow-hidden flex flex-col bg-white">
      <TitleBar />
      <Ribbon />
      <FormulaBar />
      <Sheet />
      <SheetTabs />
      <StatusBar />
    </div>
  );
}
